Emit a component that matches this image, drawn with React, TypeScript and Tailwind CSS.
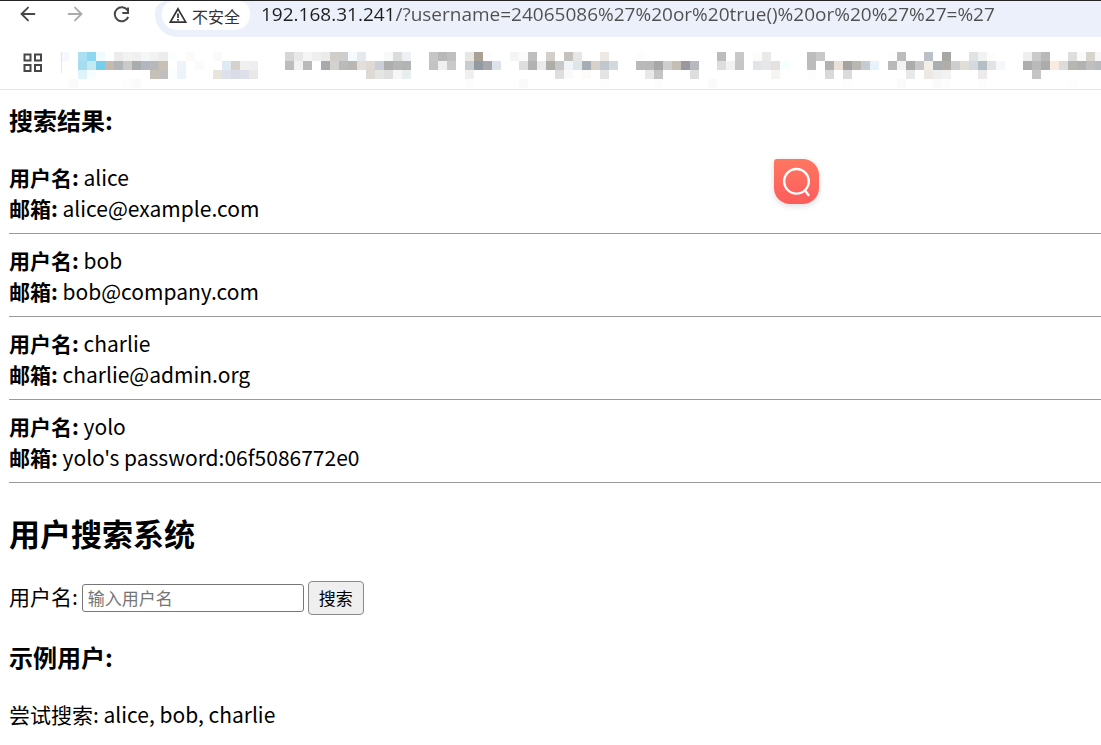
import { ArrowLeft, ArrowRight } from "lucide-react";

const CELL = 9;

// Each row lists runs of blocks: the first column, then the colour of each block.
const bookmarkRows: [number, string][][] = [
  [
    [0, "f5f9ff"], [2, "addff3 8dd8f0 f0faff"], [6, "edecea f2f2f1 f0f0f0 f4f6f9 f2f2f2 ececec fcfdff"],
    [14, "fdfbf9"], [17, "fafafa"], [25, "d6d6d6 e8e8e8 f5f5f5 efefef ebebeb d1cdc9 cdcdcd f5faff e6e9ec"],
    [36, "f7faf9 dcdcda edf1f6"], [41, "c5c5c5 b8b8b8 bfbfbf"], [45, "e8e7e5 aaa096 fdfdfd"],
    [50, "f5f5f5 fbfbfb bebebe"], [54, "d3cfca"], [56, "c5c1bc e6e6e6"], [60, "ede8e3"], [64, "fdfdfd"],
    [73, "bcbcbc"], [75, "c8c8c8"], [77, "fcfcfc e9e9e8"], [83, "bcbcbc c9c9c9"], [92, "fdfdfd bcbcbc"],
    [96, "bac0c5"], [98, "a7a7a5"], [101, "dfe3e3 f1f3f2 fefdfa"], [107, "eeeeee cacaca b9b9b9"],
    [112, "dedede fafafa d7d3cd f6f6f6"],
  ],
  [
    [2, "a6dcef c4e9f3 77cdec c5bab2 b2b5b8 cacaca a8acac b1b6c0 b8b8b8 c8bfb5"], [13, "eef3fb"], [15, "fdfbfa"],
    [18, "e0eaf4 d5d2cc f0f0ef edeef0"], [25, "bdbdbd f2f2f2 b9b9b9"],
    [29, "a9a8ac d2d2d0 bababa bab6b2 e3dedb dfd9d5 c9ced9 aeafad b4b6b6 b2b4b3"],
    [41, "c3c3c3 f0f0f0 cacaca"], [45, "c9cccf 939ba2 a7a8ac dce3eb"],
    [51, "dedede b2b2b2 ebebeb aeada8 c5c8c7 f0f3f8 dee7e7 a6adb7 d8d1c9 c0c7cf d3d8dc"],
    [64, "b9b9b9 b9b9b9 a7a7a7 cecece c5bfb3 98999e b6babf"], [73, "dddddd f2f2f2 c6c6c6"],
    [77, "e2e4e7 e5e7ea e5e2de f5ffff"], [83, "bcbcbc"], [85, "b2b2b2 e9e1d6 a5a3a0 bab7b3 c4cbd1 e8f2fd"],
    [92, "b9b9b9 f3f3f3 acacac c7c7c7 f2efe8 a8aeb2 b1aeaa cecece e1ddd7 d4d9de b3bec7 e2e3e2 f6f7fb"],
    [107, "adadad bababa acacac f7ecdf dedcda b8b6b3 b2b2b2 bfbfbf b8bcc0"],
  ],
  [
    [2, "dff4fa f8fdff"], [10, "c5c1b8 bfbfbf fcfdff eef2fb"], [17, "e9e4dc dde1ec dadde5 dde0e8 e8e8e8"],
    [34, "dfd9d6 e5e5e3 dfdfdf f4f6f8 e8eded"], [45, "f1f0ef"], [55, "dedede f9f9f9"], [58, "fdfbf9"], [60, "e4e4e4"],
    [65, "e8e8e8 c4c4c4"], [70, "dedede"], [79, "f7f5f3"], [83, "fdfdfd"], [85, "d9d9d9"], [87, "d9dbdd"],
    [94, "e9e9e9"], [96, "ece8e4 efefef f2f2f2"], [102, "eceaea"], [108, "c5c5c5"],
  ],
  [
    [1, "fafafa"], [7, "fdfdfd fafafa"], [45, "fdfdfd"], [51, "fafafa"], [60, "fdfdfd"], [66, "fdfdfd"],
    [72, "fafafa"], [87, "fdfdfd"], [93, "fafafa"], [97, "fafafa fdfdfd"], [102, "fdfdfd"], [112, "fdfdfd"],
  ],
];

const users = [
  { name: "alice", email: "alice@example.com" },
  { name: "bob", email: "bob@company.com" },
  { name: "charlie", email: "charlie@admin.org" },
  { name: "yolo", email: "yolo's password:06f5086772e0" },
];

function PixelBookmarks() {
  return (
    <svg className="shrink-0" width={1044} height={36} shapeRendering="crispEdges" aria-hidden="true">
      {bookmarkRows.map((runs, row) =>
        runs.map(([start, colours]) =>
          colours.split(" ").map((colour, i) => (
            <rect key={`${row}-${start + i}`} x={(start + i) * CELL} y={row * CELL} width={CELL} height={CELL} fill={`#${colour}`} />
          )),
        ),
      )}
      <rect x={1} y={0} width={1} height={21} fill="#dfe8fa" />
    </svg>
  );
}

function Toolbar() {
  return (
    <div className="flex h-9 items-start">
      <div className="flex w-[155px] shrink-0 items-center gap-[25px] pt-px pl-[17px]">
        <button type="button" aria-label="Back" className="text-[#474747]">
          <ArrowLeft size={22} strokeWidth={2} />
        </button>
        <button type="button" aria-label="Forward" className="text-[#ababab]">
          <ArrowRight size={22} strokeWidth={2} />
        </button>
        <button type="button" aria-label="Reload" className="text-[#474747]">
          <svg width="22" height="24" viewBox="0 0 22 24" fill="none" stroke="currentColor" strokeWidth="2">
            <path d="M16.5 8.3A7 7 0 1 0 17.2 15" />
            <path d="M17 5.5V10.9H11.3" />
          </svg>
        </button>
      </div>
      <div className="flex h-9 min-w-0 flex-1 items-start rounded-bl-[22px] rounded-tl-[12px] bg-[#ecf0fa] pl-[7px]">
        <button
          type="button"
          className="flex h-[29px] w-[88px] shrink-0 items-center gap-1 rounded-b-[15px] rounded-t-[12px] bg-white pl-1.5 text-[16px] leading-[28px] text-[#333]"
        >
          <svg width="20" height="20" viewBox="0 0 20 20" fill="none" stroke="#333" strokeWidth="1.7">
            <path d="M10 2.8L17.7 16.2H2.3Z" />
            <path d="M10 7.5V12M10 13V14.7" />
          </svg>
          不安全
        </button>
        <input
          type="text"
          aria-label="Address"
          defaultValue="192.168.31.241/?username=24065086%27%20or%20true()%20or%20%27%27=%27"
          className="ml-[11px] h-[26px] min-w-0 flex-1 bg-[linear-gradient(90deg,#1f1f1f_134px,#4f4f4f_134px)] bg-clip-text font-['Open_Sans','Noto_Sans_CJK_SC',sans-serif] text-[19px] text-transparent outline-none"
        />
      </div>
    </div>
  );
}

export default function App() {
  return (
    <div className="min-h-screen overflow-hidden bg-white font-['Noto_Sans_CJK_SC','Noto_Sans',sans-serif] text-[21px] leading-[31px] text-black">
      <header className="border-b border-[#e8e8e8] border-t border-t-[#242424]">
        <Toolbar />
        <div className="flex h-[52px] items-start overflow-hidden pt-[15px] pl-[23px]">
          <button type="button" aria-label="Apps" className="mr-[18px] shrink-0">
            <svg width="19" height="20" viewBox="0 0 19 20" fill="none" stroke="#474747" strokeWidth="2">
              <path d="M1.5 2.5h6v6h-6zM12 2.5h6v6h-6zM1.5 13h6v6h-6zM12 13h6v6h-6z" />
            </svg>
          </button>
          <PixelBookmarks />
        </div>
      </header>

      <main className="pl-[9px]">
        <section>
          <h3 className="pt-[13px] text-[24px] leading-[34px] font-bold">搜索结果:</h3>
          <div className="pt-[25px]">
            {users.map((user) => (
              <div key={user.name} className="mb-[11px] border-b border-[#9a9a9a] pb-[9px]">
                <p>
                  <strong>用户名:</strong> {user.name}
                </p>
                <p>
                  <strong>邮箱:</strong> {user.email}
                </p>
              </div>
            ))}
          </div>
        </section>

        <h2 className="pt-4 text-[31px] leading-[46px] font-bold">用户搜索系统</h2>

        <form className="flex items-baseline gap-1 pt-[25px]" onSubmit={(e) => e.preventDefault()}>
          <label htmlFor="username">用户名:</label>
          <input
            id="username"
            type="text"
            placeholder="输入用户名"
            className="h-7 w-[222px] rounded-[3px] border border-[#767676] px-[5px] text-[17px] leading-[24px] placeholder:text-[#757575]"
          />
          <button type="submit" className="h-[34px] w-14 rounded-[4px] border border-[#8a8a8a] bg-[#efefef] text-[17px] leading-[30px]">
            搜索
          </button>
        </form>

        <h3 className="pt-[25px] text-[24px] leading-[34px] font-bold">示例用户:</h3>
        <p className="pt-[25px]">尝试搜索: alice, bob, charlie</p>
      </main>

      <button
        type="button"
        aria-label="Search"
        className="absolute top-[159px] left-[774px] size-[45px] rounded-[16px] rounded-tl-[3px] bg-linear-to-b from-[#ff7660] to-[#fc5c5c] shadow-[0_2px_6px_rgba(0,0,0,0.14)]"
      >
        <svg width="45" height="45" viewBox="0 0 45 45" fill="none" stroke="white" strokeWidth="2.4" strokeLinecap="round">
          <circle cx="22.5" cy="22.3" r="12.3" />
          <path d="M31 31.5L34.5 36" />
        </svg>
      </button>
    </div>
  );
}
